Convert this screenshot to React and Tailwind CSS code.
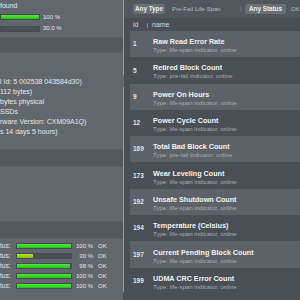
import React from "react";

const attrs = [
  { id: 1, name: "Raw Read Error Rate", type: "life-span" },
  { id: 5, name: "Retired Block Count", type: "pre-fail" },
  { id: 9, name: "Power On Hours", type: "life-span" },
  { id: 12, name: "Power Cycle Count", type: "life-span" },
  { id: 169, name: "Total Bad Block Count", type: "pre-fail" },
  { id: 173, name: "Wear Leveling Count", type: "life-span" },
  { id: 192, name: "Unsafe Shutdown Count", type: "life-span" },
  { id: 194, name: "Temperature (Celsius)", type: "life-span" },
  { id: 197, name: "Current Pending Block Count", type: "life-span" },
  { id: 199, name: "UDMA CRC Error Count", type: "life-span" },
];

const info = [
  "l Id: 5 002538 043584d30)",
  "112 bytes)",
  "bytes physical",
  "SSDs",
  "rware Version: CXM09A1Q)",
  "s 14 days 5 hours)",
];

const health = [
  { pct: 100, label: "100 %" },
  { pct: 30, label: "30 %", warn: true },
  { pct: 98, label: "98 %" },
  { pct: 100, label: "100 %" },
  { pct: 100, label: "100 %" },
];

function Bar({ pct, warn, width }) {
  return (
    <div
      className="h-[6px] bg-[#4b5056] border border-[#454a50] overflow-hidden"
      style={{ width }}
    >
      <div
        className={
          warn
            ? "h-full bg-gradient-to-b from-[#b6e02a] to-[#8cbc10]"
            : "h-full bg-gradient-to-b from-[#4fe83a] to-[#1fc612]"
        }
        style={{ width: pct + "%" }}
      />
    </div>
  );
}

export default function App() {
  return (
    <div
      className="w-[300px] h-[300px] flex overflow-hidden bg-[#4a4f56]"
      style={{ fontFamily: '"Liberation Sans", Arial, sans-serif' }}
    >
      {/* left summary panel */}
      <div className="w-[123px] shrink-0 flex flex-col bg-[#62676e] text-[#e6e8ea]">
        <div className="h-[12px] pt-[2px] text-[7px] leading-[8px]">found</div>
        <div className="h-[10px] flex items-center gap-[3px]">
          <Bar pct={100} width="40px" />
          <span className="text-[6px]">100 %</span>
        </div>
        <div className="h-[13px] flex items-center gap-[3px]">
          <Bar pct={0} width="40px" />
          <span className="text-[6px]">30.0 %</span>
        </div>
        <div className="h-[2px]" />
        <div className="h-[16px] bg-[#53585f] border-y border-[#5a5f66]" />
        <div className="pt-[24px] pb-[12px] text-[7px] leading-[10px]">
          {info.map((l) => (
            <div key={l} className="whitespace-nowrap">{l}</div>
          ))}
        </div>
        <div className="h-[18px] bg-[#53585f] border-y border-[#5a5f66]" />
        <div className="h-[54px]" />
        <div className="h-[18px] bg-[#53585f] border-y border-[#5a5f66]" />
        <div className="pt-[2px] flex flex-col">
          {health.map((h, i) => (
            <div key={i} className="h-[10px] flex items-center text-[6px]">
              <span className="w-[16px] text-[6.5px]">tus:</span>
              <Bar pct={h.pct} warn={h.warn} width="56px" />
              <span className="w-[21px] text-right">{h.label}</span>
              <span className="ml-[5px]">OK</span>
            </div>
          ))}
        </div>
      </div>

      {/* splitter */}
      <div className="w-[1px] shrink-0 flex flex-col">
        <div className="h-[75px] bg-[#989da3]" />
        <div className="h-[12px] bg-[#4070b0]" />
        <div className="h-[205px] bg-[#989da3]" />
      </div>

      {/* attribute list */}
      <div className="flex-1 flex flex-col min-w-0">
        <div className="h-[19px] shrink-0 flex items-center pl-[9px] bg-[#52575e] border-b border-[#484d54] whitespace-nowrap">
          <span className="w-[32px] h-[10px] flex items-center justify-center rounded-[2px] bg-[#6a6f76] text-[6.3px] font-bold text-[#eef0f2]">
            Any Type
          </span>
          <span className="ml-[7px] w-[23px] text-[6px] text-[#b9bdc2]">Pre-Fail</span>
          <span className="w-[45px] text-[6px] text-[#b9bdc2]">Life-Span</span>
          <span className="w-[5px] text-[6px] text-[#8e9399]">|</span>
          <span className="w-[41px] h-[10px] flex items-center justify-center rounded-[2px] bg-[#6a6f76] text-[6.3px] font-bold text-[#eef0f2]">
            Any Status
          </span>
          <span className="ml-[5px] text-[6px] text-[#b9bdc2]">OK</span>
        </div>
        <div className="h-[12px] shrink-0 flex items-center pl-[9px] text-[7px] text-[#d6d9dc]">
          <span className="w-[14px]">id</span>
          <span className="w-[1px] h-[5px] bg-[#858a90]" />
          <span className="ml-[4px]">name</span>
        </div>
        <div className="pl-[6px] flex flex-col">
          {attrs.map((a, i) => (
            <div
              key={a.id}
              className={
                "h-[26.3px] shrink-0 flex items-center " +
                (i % 2 === 0 ? "bg-[#5d6269]" : "")
              }
            >
              <div className="w-[23px] pl-[3px] text-[6.5px] font-bold text-[#e4e6e8]">
                {a.id}
              </div>
              <div className="pt-[3px] flex flex-col whitespace-nowrap">
                <div className="text-[7.2px] leading-[9px] font-bold text-[#f3f4f5]">
                  {a.name}
                </div>
                <div className="text-[6.1px] leading-[8px] text-[#a8acb1]">
                  Type: {a.type} indicator, online
                </div>
              </div>
            </div>
          ))}
        </div>
      </div>
    </div>
  );
}
